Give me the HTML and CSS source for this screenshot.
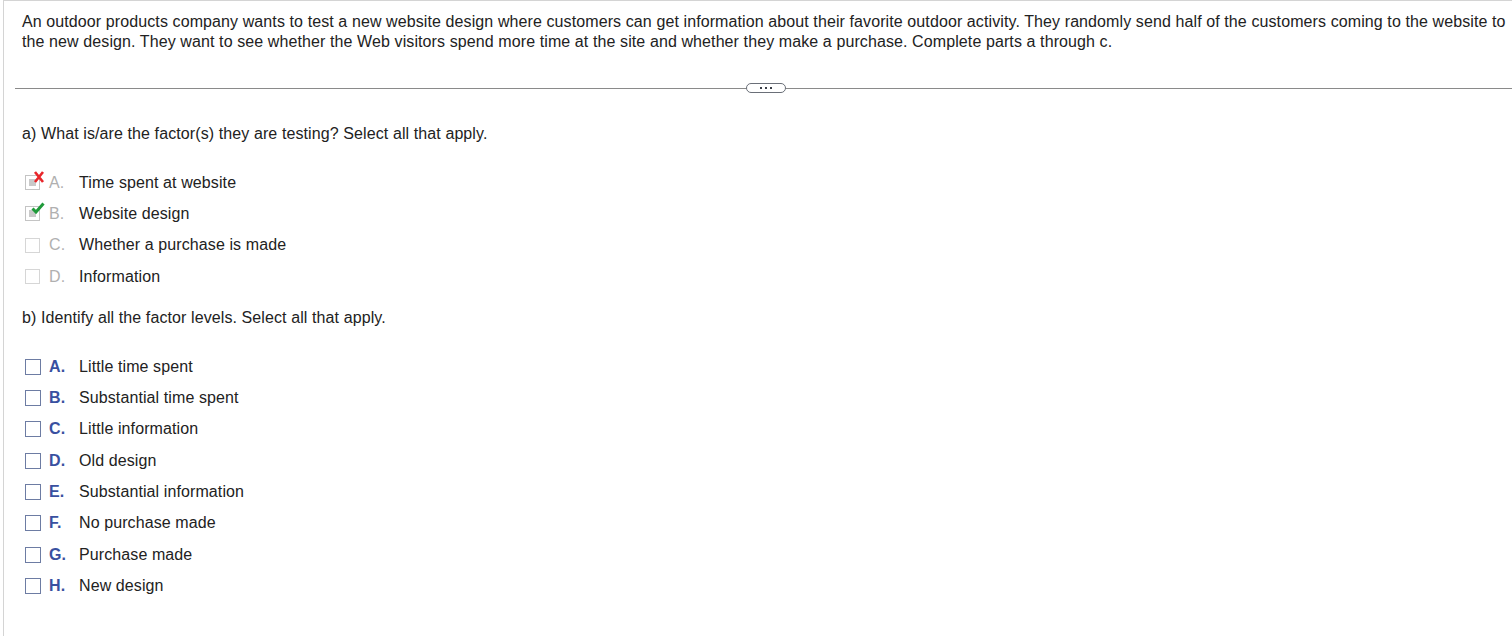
FILE: index.html
```html
<!DOCTYPE html>
<html lang="en">
<head>
  <meta charset="UTF-8" />
  <title>Question</title>
  <link rel="stylesheet" href="styles.css">
</head>
<body>
  <div class="question">
    <p class="stem">
      An outdoor products company wants to test a new website design where customers can get information about their favorite outdoor activity. They randomly send half of the customers coming to the website to the new design. They want to see whether the Web visitors spend more time at the site and whether they make a purchase. Complete parts a through c.
    </p>

    <div class="divider">
      <span class="more"><i></i><i></i><i></i></span>
    </div>

    <p class="part">a) What is/are the factor(s) they are testing? Select all that apply.</p>

    <ul class="choices done">
      <li>
        <span class="box checked">
          <svg class="mark" width="12" height="12" viewBox="0 0 12 12"><path d="M2 1 L10 11 M10 1 L2 11" stroke="#e8262a" stroke-width="2.6"/></svg>
        </span>
        <span class="letter">A.</span> Time spent at website
      </li>
      <li>
        <span class="box checked">
          <svg class="mark" width="14" height="12" viewBox="0 0 14 12"><path d="M1.5 6.5 L5 10 L12.5 1.5" stroke="#1f9a3a" stroke-width="3" fill="none"/></svg>
        </span>
        <span class="letter">B.</span> Website design
      </li>
      <li><span class="box"></span><span class="letter">C.</span> Whether a purchase is made</li>
      <li><span class="box"></span><span class="letter">D.</span> Information</li>
    </ul>

    <p class="part">b) Identify all the factor levels. Select all that apply.</p>

    <ul class="choices open">
      <li><span class="box"></span><span class="letter">A.</span> Little time spent</li>
      <li><span class="box"></span><span class="letter">B.</span> Substantial time spent</li>
      <li><span class="box"></span><span class="letter">C.</span> Little information</li>
      <li><span class="box"></span><span class="letter">D.</span> Old design</li>
      <li><span class="box"></span><span class="letter">E.</span> Substantial information</li>
      <li><span class="box"></span><span class="letter">F.</span> No purchase made</li>
      <li><span class="box"></span><span class="letter">G.</span> Purchase made</li>
      <li><span class="box"></span><span class="letter">H.</span> New design</li>
    </ul>
  </div>
</body>
</html>
```
FILE: styles.css
```css
body {
  margin: 0;
  font-family: 'Liberation Sans', Arial, sans-serif;
  letter-spacing: 0.1px;
  color: #222;
  background: #fff;
}

.question {
  margin-left: 3px;
  border-left: 1px solid #d4d4d4;
  border-top: 1px solid #d4d4d4;
  min-height: 640px;
  padding: 11px 0 0 18px;
}

.stem {
  margin: 0;
  padding-right: 4px;
  font-size: 16px;
  line-height: 20px;
}

.divider {
  margin: 36px 0 0 -7px;
  height: 1px;
  background: #8a8a8a;
  position: relative;
}

.more {
  position: absolute;
  left: 731px;
  top: -5px;
  width: 38px;
  height: 8px;
  border: 1px solid #6a6f78;
  border-radius: 6px;
  background: #fff;
  display: flex;
  justify-content: center;
  align-items: center;
  gap: 3px;
}

.more i {
  width: 2px;
  height: 2px;
  background: #3a3f48;
}

.part {
  margin: 35px 0 0;
  font-size: 16px;
  line-height: 20px;
}

.choices + .part {
  margin-top: 16px;
}

.choices {
  list-style: none;
  margin: 23px 0 0;
  padding: 0;
  font-size: 16px;
}

.choices li {
  display: flex;
  align-items: center;
  height: 31.3px;
}

.box {
  position: relative;
  width: 15px;
  height: 15px;
  margin: 0 9px 0 3px;
  box-sizing: border-box;
  flex-shrink: 0;
}

.letter {
  width: 30px;
  flex-shrink: 0;
}

.done .box {
  border: 1px solid #d6d6d6;
}

.done .box.checked {
  border-color: #c4c4c4;
  background: linear-gradient(#c9c9c9, #c9c9c9) no-repeat 3px 3px / 7px 7px;
}

.done .letter {
  color: #b0b0b0;
}

.mark {
  position: absolute;
  right: -6px;
  top: -5px;
}

.open .box {
  width: 16px;
  height: 16px;
  margin: 0 8px 0 3px;
  border: 1.5px solid #6d7ca3;
}

.open .letter {
  color: #3950a0;
  font-weight: bold;
}
```
